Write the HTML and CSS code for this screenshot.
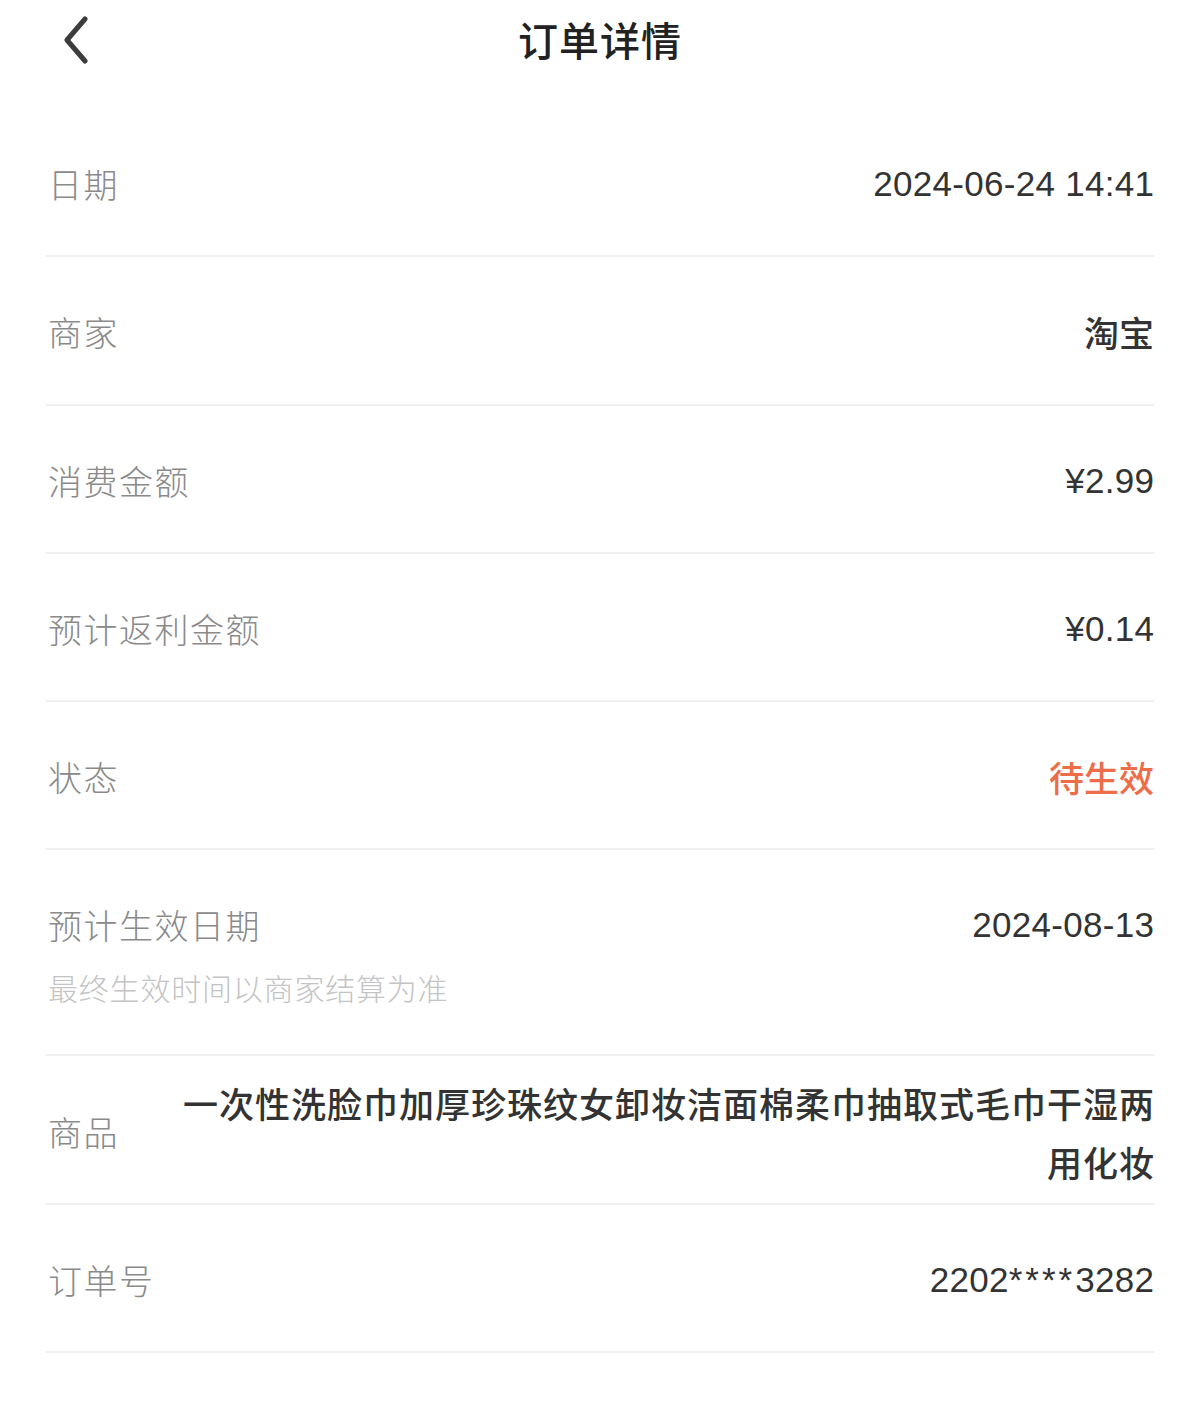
FILE: index.html
```html
<!DOCTYPE html>
<html lang="zh-CN">
<head>
  <meta charset="UTF-8" />
  <meta name="viewport" content="width=device-width, initial-scale=1.0"/>
  <title>订单详情</title>
  <link rel="stylesheet" href="styles.css">
</head>
<body>
  <div class="page">
    <div class="header">
      <a class="back" href="#">
        <svg width="30" height="48" viewBox="0 0 30 48">
          <path d="M23 3 L5 24 L23 45" fill="none" stroke="#3c3c3c" stroke-width="5" stroke-linecap="round" stroke-linejoin="round"/>
        </svg>
      </a>
      <h1>订单详情</h1>
    </div>

    <div class="list">
      <div class="row">
        <div class="label">日期</div>
        <div class="value num">2024-06-24 14:41</div>
      </div>
      <div class="row">
        <div class="label">商家</div>
        <div class="value">淘宝</div>
      </div>
      <div class="row">
        <div class="label">消费金额</div>
        <div class="value num">¥2.99</div>
      </div>
      <div class="row">
        <div class="label">预计返利金额</div>
        <div class="value num">¥0.14</div>
      </div>
      <div class="row">
        <div class="label">状态</div>
        <div class="value pending">待生效</div>
      </div>
      <div class="row row-tall">
        <div class="label-group">
          <div class="label">预计生效日期</div>
          <div class="hint">最终生效时间以商家结算为准</div>
        </div>
        <div class="value num">2024-08-13</div>
      </div>
      <div class="row">
        <div class="label">商品</div>
        <div class="value goods">一次性洗脸巾加厚珍珠纹女卸妆洁面棉柔巾抽取式毛巾干湿两用化妆</div>
      </div>
      <div class="row">
        <div class="label">订单号</div>
        <div class="value num">2202<span class="mask">****</span>3282</div>
      </div>
    </div>
  </div>
</body>
</html>
```

FILE: styles.css
```css
body {
  margin: 0;
  background: #fff;
  font-family: "Noto Sans CJK SC", "Noto Sans", sans-serif;
  color: #333;
}

.page {
  width: 1200px;
  padding: 0 46px;
  box-sizing: border-box;
}

.header {
  height: 78px;
  display: flex;
  align-items: center;
  justify-content: center;
  position: relative;
}

.back {
  position: absolute;
  left: 16px;
  top: 16px;
  display: block;
  width: 30px;
  height: 48px;
}

.header h1 {
  margin: 0;
  font-size: 40px;
  font-weight: 500;
  color: #222;
  letter-spacing: 1px;
}

.list {
  margin-top: 31px;
}

.row {
  height: 148.3px;
  box-sizing: border-box;
  border-bottom: 2px solid #f0f0f0;
  display: flex;
  align-items: center;
  justify-content: space-between;
  padding-top: 4px;
}

.label {
  font-size: 34px;
  line-height: 48px;
  font-weight: 300;
  color: #8a8a8a;
  letter-spacing: 1.5px;
  padding-left: 2px;
  flex: none;
}

.value {
  font-size: 35px;
  line-height: 48px;
  font-weight: 500;
  color: #333;
  text-align: right;
}

.value.num {
  font-family: "Liberation Sans", "Noto Sans", sans-serif;
  font-weight: 400;
  font-size: 35px;
  letter-spacing: 0.3px;
  margin-right: -0.3px;
}

.value .mask {
  letter-spacing: 3px;
}

.value.pending {
  color: #ec6d48;
}

.row-tall {
  height: 206px;
  align-items: flex-start;
  padding-top: 51px;
}

.hint {
  margin-top: 18px;
  font-size: 30px;
  line-height: 40px;
  font-weight: 300;
  color: #c4c4c4;
  letter-spacing: 0.8px;
  padding-left: 2px;
}

.value.goods {
  width: 990px;
  flex: none;
  line-height: 59px;
  letter-spacing: 1px;
  margin-right: -1px;
}
```
